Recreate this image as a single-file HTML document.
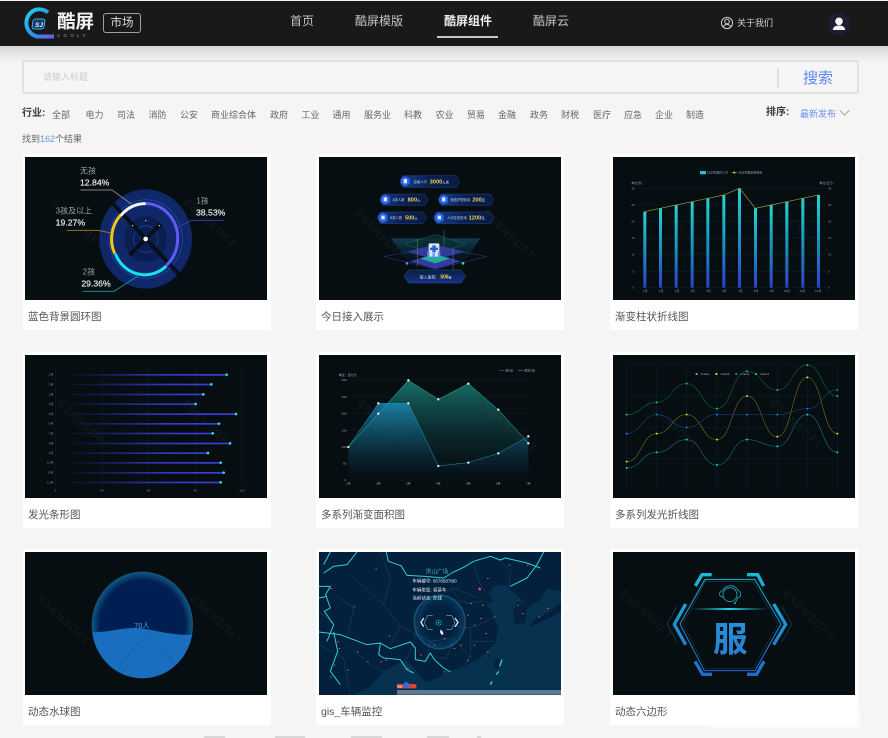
<!DOCTYPE html>
<html lang="zh"><head><meta charset="utf-8"><title>酷屏市场</title>
<style>
*{box-sizing:border-box;margin:0;padding:0}
html,body{width:888px;height:738px;overflow:hidden;background:#f5f5f5}
body{position:relative;font-family:"Liberation Sans","Noto Sans CJK SC",sans-serif;color:#555}
.a{position:absolute;white-space:nowrap}
.hd{left:0;top:1px;width:888px;height:45px;background:#191919}
.sh{left:0;top:46px;width:888px;height:16px;background:linear-gradient(#d6d6d6,#f5f5f5)}
.nav{top:13px;font-size:12px;line-height:16px;color:#c4c4c4}
.sb{left:22px;top:60px;width:837px;height:34px;border:2px solid #e2e2e2;border-radius:2px;background:#f6f6f6}
.f{top:108px;font-size:9px;line-height:14px;color:#666}
.card{position:absolute;width:248px;height:176px;background:#fff}
.card svg{position:absolute;left:2.300px;top:3.300px;width:242px;height:143px;display:block;background:#060e11;filter:blur(.35px)}
.c2 svg{left:3px}
.c3 svg{left:3.300px}
.card p{position:absolute;left:5px;top:155.500px;font-size:10.500px;line-height:14px;color:#555;white-space:nowrap}
.wm{font:bold 33px "Liberation Sans",sans-serif;letter-spacing:3px;fill:#fff;opacity:.035}
.tx{font-family:"Liberation Sans","Noto Sans CJK SC",sans-serif}
</style></head><body>
<div class="a hd"></div><div class="a sh"></div>
<svg class="a" style="left:20px;top:6px" width="38" height="36" viewBox="0 0 38 36">
<defs><linearGradient id="lg" x1="0" y1="0" x2="1" y2="1"><stop offset="0" stop-color="#1fd0e8"/><stop offset=".6" stop-color="#2f8ff0"/><stop offset="1" stop-color="#6a5cf0"/></linearGradient></defs>
<path d="M28 6.500A14 14 0 0 0 15 4 14 14 0 0 0 17 30.500H34" fill="none" stroke="url(#lg)" stroke-width="4"/>
<rect x="13" y="13" width="12" height="10" rx="2.500" transform="skewX(-8) translate(2 0)" fill="#173a66" stroke="#2fb4e8"/>
<text x="15" y="21" font-size="6.500" font-weight="bold" font-style="italic" fill="#d8f2ff" class="tx">SJ</text></svg>
<div class="a tx" style="left:57px;top:10px;font-size:18.500px;line-height:24px;font-weight:bold;color:#f2f2f2">酷屏</div>
<div class="a" style="left:57px;top:33px;font-size:4.500px;line-height:6px;letter-spacing:3.300px;color:#9a9a9a">COOLY</div>
<div class="a" style="left:103px;top:13px;width:38px;height:20px;border:1px solid #a0a0a0;border-radius:3px;font-size:11.500px;line-height:18px;text-align:center;color:#ddd">市场</div>
<div class="a nav" style="left:290px">首页</div>
<div class="a nav" style="left:355px">酷屏模版</div>
<div class="a nav" style="left:444px;font-weight:bold;color:#f0f0f0">酷屏组件</div>
<div class="a nav" style="left:533px">酷屏云</div>
<div class="a" style="left:437px;top:36px;width:61px;height:1.500px;background:#c8c8c8"></div>
<svg class="a" style="left:720px;top:16px" width="14" height="14" viewBox="0 0 14 14" fill="none" stroke="#cfcfcf"><circle cx="7" cy="7" r="5.600"/><circle cx="7" cy="5.500" r="2.300"/><path d="M3.200 11C4 9 5.500 8.500 7 8.500S10 9 10.800 11"/></svg>
<div class="a" style="left:737px;top:17px;font-size:9px;line-height:13px;color:#d0d0d0">关于我们</div>
<svg class="a" style="left:828px;top:13px" width="22" height="22" viewBox="0 0 22 22"><circle cx="11" cy="11" r="11" fill="#1f1d33"/><circle cx="11" cy="8.300" r="3.800" fill="#f4f4f4"/><path d="M4.800 17C5 13.500 8 12.500 11 12.500S17 13.500 17.200 17Z" fill="#f4f4f4"/></svg>

<div class="a sb"></div>
<div class="a" style="left:43px;top:70px;font-size:9px;line-height:14px;color:#c9c9c9">请输入标题</div>
<div class="a" style="left:777px;top:68px;width:1.500px;height:20px;background:#e2e2e2"></div>
<div class="a" style="left:803px;top:68px;font-size:15px;line-height:21px;color:#5c86f3">搜索</div>

<div class="a f" style="left:22px;top:107px;font-size:10px;font-weight:bold;color:#3c3c3c">行业:</div>
<div class="a f" style="left:52px">全部</div><div class="a f" style="left:85.500px">电力</div><div class="a f" style="left:117px">司法</div><div class="a f" style="left:148.500px">消防</div><div class="a f" style="left:180px">公安</div><div class="a f" style="left:211px">商业综合体</div><div class="a f" style="left:270px">政府</div><div class="a f" style="left:301.500px">工业</div><div class="a f" style="left:332.500px">通用</div><div class="a f" style="left:364px">服务业</div><div class="a f" style="left:404px">科教</div><div class="a f" style="left:435.500px">农业</div><div class="a f" style="left:467px">贸易</div><div class="a f" style="left:498px">金融</div><div class="a f" style="left:530px">政务</div><div class="a f" style="left:561px">财税</div><div class="a f" style="left:593px">医疗</div><div class="a f" style="left:624px">应急</div><div class="a f" style="left:655px">企业</div><div class="a f" style="left:686px">制造</div>
<div class="a f" style="left:766px;top:106px;font-size:10px;font-weight:bold;color:#3c3c3c">排序:</div>
<div class="a f" style="left:800px;top:107px;color:#6a8ff5">最新发布</div>
<svg class="a" style="left:839px;top:109px" width="11" height="8" viewBox="0 0 11 8"><path d="M.800 1.500 5.500 6 10.200 1.500" fill="none" stroke="#a8a8a8"/></svg>
<div class="a f" style="left:22px;top:132px;color:#666">找到<span style="color:#6a8ff5">162</span>个结果</div>

<!-- 1 -->
<div class="card" style="left:23px;top:154px"><svg viewBox="16 22 726 429">
<text class="wm" transform="translate(95 165) rotate(43)">ESENSOFT</text><text class="wm" transform="translate(490 160) rotate(43)">ESENSOFT</text>
<g transform="translate(378 268) scale(1 1.070)">
<circle r="139" fill="#10286a"/>
<circle r="110" fill="none" stroke="#2756d0" stroke-width="1.500"/>
<circle r="92" fill="#10286a"/><circle r="64" fill="#0b1e52"/>
<circle r="37" fill="none" stroke="#2a4fb0" stroke-width="1.500"/>
</g>
<path d="M278 160 478 374M424 222 330 316" stroke="#060e11" stroke-width="12" fill="none" opacity=".92"/>
<path d="M378 162A96 103 0 0 1 474 268 96 103 0 0 1 440 347" fill="none" stroke="#5f5cf2" stroke-width="9"/>
<path d="M440 349A96 103 0 0 1 287 312" fill="none" stroke="#17e2f0" stroke-width="9"/>
<path d="M285 312A96 103 0 0 1 303 196" fill="none" stroke="#f5c518" stroke-width="9"/>
<path d="M303 198A96 103 0 0 1 378 162" fill="none" stroke="#f4f4f4" stroke-width="9"/>
<circle cx="378" cy="268" r="7" fill="#fff"/><circle cx="339" cy="228" r="2" fill="#ddd"/><circle cx="378" cy="213" r="2" fill="#ddd"/><circle cx="419" cy="228" r="2" fill="#ddd"/>
<path d="M182 121H277L335 163" fill="none" stroke="#aaa" stroke-width="2"/>
<path d="M141 242H235L274 250" fill="none" stroke="#8a7420" stroke-width="3"/>
<path d="M612 212H515L476 232" fill="none" stroke="#3a37a0" stroke-width="3"/>
<path d="M189 425H283L360 376" fill="none" stroke="#108a90" stroke-width="3"/>
<g class="tx" font-size="24" fill="#9aa0a4"><text x="181" y="72">无孩</text><text x="108" y="192">3孩及以上</text><text x="530" y="162">1孩</text><text x="189" y="375">2孩</text></g>
<g class="tx" font-size="26" fill="#e6e6e6" stroke="#e6e6e6" stroke-width=".6"><text x="181" y="107">12.84%</text><text x="108" y="227">19.27%</text><text x="529" y="197">38.53%</text><text x="185" y="410">29.36%</text></g>
</svg><p>蓝色背景圆环图</p></div>

<!-- 2 -->
<div class="card c2" style="left:316px;top:154px"><svg viewBox="16 22 726 429">
<defs><linearGradient id="pl" x1="0" x2="1" y1="0" y2="0"><stop offset="0" stop-color="#153f98"/><stop offset=".5" stop-color="#0b1f50"/><stop offset="1" stop-color="#0a1a42"/></linearGradient>
<linearGradient id="bm" x1="0" x2="0" y1="0" y2="1"><stop offset="0" stop-color="#082040"/><stop offset="1" stop-color="#1a2f88"/></linearGradient>
<linearGradient id="cone" x1="0" x2="0" y1="0" y2="1"><stop offset="0" stop-color="#14506a" stop-opacity=".75"/><stop offset="1" stop-color="#0a2040" stop-opacity=".15"/></linearGradient></defs>
<text class="wm" transform="translate(120 195) rotate(43)">ESENSOFT</text><text class="wm" transform="translate(505 195) rotate(43)">ESENSOFT</text>
<g fill="url(#pl)" stroke="#26437f" stroke-width="1.500">
<path d="M268 78H428L438 95 428 113H268L258 95Z"/>
<path d="M208 133H334L344 150 334 167H208L198 150Z"/><path d="M383 133H530L540 150 530 167H383L373 150Z"/>
<path d="M201 187H328L338 204 328 222H201L191 204Z"/><path d="M369 187H530L540 204 530 222H369L359 204Z"/>
</g>
<g fill="#2a66ea"><path d="M275 80 288 87V103L275 111 262 103V87Z"/><path d="M215 135 228 142V158L215 165 202 158V142Z"/><path d="M390 135 403 142V158L390 165 377 158V142Z"/><path d="M208 189 221 196V212L208 220 195 212V196Z"/><path d="M377 189 390 196V212L377 220 364 212V196Z"/></g>
<g fill="#dfe8ff"><rect x="270" y="88" width="10" height="13"/><rect x="210" y="143" width="10" height="12"/><rect x="385" y="143" width="10" height="12"/><rect x="203" y="198" width="10" height="11"/><rect x="372" y="198" width="10" height="11"/></g>
<g class="tx" font-size="10" fill="#b8c6e0"><text x="300" y="100">高级人次</text><text x="236" y="154">A类人数</text><text x="410" y="154">家庭护理费用</text><text x="229" y="208">B类人数</text><text x="400" y="208">人均住院费用</text></g>
<g class="tx" font-size="17" font-weight="bold" fill="#e8d850"><text x="348" y="101">3000<tspan font-size="10" fill="#b8c6e0">人次</tspan></text><text x="282" y="156">800<tspan font-size="10" fill="#b8c6e0">人</tspan></text><text x="476" y="156">200<tspan font-size="10" fill="#b8c6e0">元</tspan></text><text x="274" y="210">500<tspan font-size="10" fill="#b8c6e0">人</tspan></text><text x="465" y="210">1200<tspan font-size="10" fill="#b8c6e0">元</tspan></text></g>
<path d="M232 266H500L450 340H285Z" fill="url(#cone)"/>
<path d="M365 254 455 284 365 314 275 284Z" fill="#0a2b33" stroke="#137a5f" stroke-width="1.500" opacity=".8"/>
<path d="M365 285 455 306 365 330 278 306Z" fill="#3740a8" opacity=".85"/>
<path d="M365 290 520 321 365 358 210 321Z" fill="none" stroke="#2b3f90" stroke-width="1.500"/>
<path d="M365 312 443 335 365 358 288 335Z" fill="#3339a4"/>
<path d="M365 313 408 327 365 341 320 327Z" fill="#1eb08e"/>
<rect x="345" y="281" width="32" height="40" rx="3" fill="#dce8fa"/><path d="M356 287H366V294H373V301H366V308H356V301H349V294H356Z" fill="#2b62c4"/>
<path d="M340 305h8v22h-8zM356 310h8v18h-8zM372 305h8v22h-8z" fill="#5c8cef" opacity=".8"/>
<path d="M311 268V350M391 242V290M418 295V360" stroke="#75806a" stroke-width="1.500"/>
<circle cx="448" cy="341" r="4" fill="#2ae0a0"/><circle cx="280" cy="341" r="4" fill="#6a88f0"/>
<path d="M285 361H442L456 380 442 400H285L271 380Z" fill="url(#bm)" stroke="#2c4f9c" stroke-width="1.500"/>
<text class="tx" x="318" y="387" font-size="12" fill="#d6dff0">接入医院</text><text class="tx" x="380" y="387" font-size="15" font-weight="bold" fill="#e8d850">506<tspan font-size="9" fill="#b8c6e0">家</tspan></text>
</svg><p>今日接入展示</p></div>

<!-- 3 -->
<div class="card c3" style="left:610px;top:154px"><svg viewBox="16 22 726 429">
<defs><linearGradient id="bar" x1="0" x2="0" y1="0" y2="1"><stop offset="0" stop-color="#24d6cc"/><stop offset=".5" stop-color="#1a93c0"/><stop offset="1" stop-color="#2a3ed2"/></linearGradient></defs>
<text class="wm" transform="translate(150 185) rotate(43)" style="opacity:.025">ESENSOFT</text><text class="wm" transform="translate(505 185) rotate(43)" style="opacity:.025">ESENSOFT</text>
<g stroke="#111f33" stroke-width="1.500"><path d="M90 116H655M90 166H655M90 215H655M90 265H655M90 315H655M90 365H655M90 414H655"/></g>
<g fill="url(#bar)"><rect x="107" y="186" width="9" height="228"/><rect x="154" y="176" width="9" height="238"/><rect x="201" y="166" width="9" height="248"/><rect x="249" y="156" width="9" height="258"/><rect x="296" y="146" width="9" height="268"/><rect x="344" y="136" width="9" height="278"/><rect x="391" y="116" width="9" height="298"/><rect x="439" y="176" width="9" height="238"/><rect x="486" y="166" width="9" height="248"/><rect x="533" y="156" width="9" height="258"/><rect x="581" y="146" width="9" height="268"/><rect x="628" y="136" width="9" height="278"/></g>
<path d="M111 186 158 176 206 166 253 156 301 146 348 136 396 116 443 176 490 166 538 156 585 146 632 136" fill="none" stroke="#a8904a" stroke-width="2"/>
<rect x="277" y="64" width="18" height="10" fill="#20c0d8"/><path d="M372 69H388" stroke="#a8904a" stroke-width="2"/><circle cx="380" cy="69" r="3" fill="#ecd040"/>
<g class="tx" font-size="9" fill="#8d98a2"><text x="298" y="72">日出色面积人次</text><text x="392" y="72">日出色面积碳排目</text><text x="71" y="103">单位(家)</text><text x="635" y="103">单位(百元)</text>
<text x="71" y="119">30</text><text x="71" y="169">25</text><text x="71" y="218">20</text><text x="71" y="268">15</text><text x="71" y="318">10</text><text x="75" y="368">5</text><text x="75" y="417">0</text>
<text x="661" y="119">30</text><text x="661" y="169">25</text><text x="661" y="218">20</text><text x="661" y="268">15</text><text x="661" y="318">10</text><text x="661" y="368">5</text><text x="661" y="417">0</text>
<text x="106" y="427">1月</text><text x="153" y="427">2月</text><text x="201" y="427">3月</text><text x="248" y="427">4月</text><text x="296" y="427">5月</text><text x="343" y="427">6月</text><text x="391" y="427">7月</text><text x="438" y="427">8月</text><text x="485" y="427">9月</text><text x="528" y="427">10月</text><text x="575" y="427">11月</text><text x="622" y="427">12月</text></g>
</svg><p>渐变柱状折线图</p></div>

<!-- 4 -->
<div class="card" style="left:23px;top:352px"><svg viewBox="16 22 726 429">
<defs><linearGradient id="hb" gradientUnits="userSpaceOnUse" x1="125" x2="560" y1="0" y2="0"><stop offset="0" stop-color="#2a2ea8" stop-opacity="0"/><stop offset=".7" stop-color="#3337c0"/><stop offset="1" stop-color="#3a3ed8"/></linearGradient></defs>
<text class="wm" transform="translate(112 170) rotate(43)">ESENSOFT</text><text class="wm" transform="translate(485 170) rotate(43)">ESENSOFT</text>
<path d="M107 60V420M247 60V420M387 60V420M527 60V420M667 60V420" stroke="#0f1c33" stroke-width="1.500"/>
<g fill="url(#hb)"><rect x="125" y="79" width="496" height="5"/><rect x="125" y="108" width="450" height="5"/><rect x="125" y="138" width="426" height="5"/><rect x="125" y="167" width="403" height="5"/><rect x="125" y="197" width="524" height="5"/><rect x="125" y="226" width="473" height="5"/><rect x="125" y="255" width="454" height="5"/><rect x="125" y="285" width="506" height="5"/><rect x="125" y="314" width="440" height="5"/><rect x="125" y="343" width="478" height="5"/><rect x="125" y="373" width="487" height="5"/><rect x="125" y="402" width="478" height="5"/></g>
<g fill="#2ce0c8"><circle cx="621" cy="81" r="4"/><circle cx="575" cy="110" r="4"/><circle cx="551" cy="140" r="4"/><circle cx="528" cy="169" r="4"/><circle cx="649" cy="199" r="4"/><circle cx="598" cy="228" r="4"/><circle cx="579" cy="257" r="4"/><circle cx="631" cy="287" r="4"/><circle cx="565" cy="316" r="4"/><circle cx="603" cy="345" r="4"/><circle cx="612" cy="375" r="4"/><circle cx="603" cy="404" r="4"/></g>
<g class="tx" font-size="9" fill="#7d8890" text-anchor="end"><text x="101" y="84">1月</text><text x="101" y="113">2月</text><text x="101" y="143">3月</text><text x="101" y="172">4月</text><text x="101" y="202">5月</text><text x="101" y="231">6月</text><text x="101" y="260">7月</text><text x="101" y="290">8月</text><text x="101" y="319">9月</text><text x="101" y="348">10月</text><text x="101" y="378">11月</text><text x="101" y="407">12月</text></g>
<g class="tx" font-size="9" fill="#7d8890" text-anchor="middle"><text x="107" y="431">0</text><text x="247" y="431">50</text><text x="387" y="431">60</text><text x="527" y="431">90</text><text x="667" y="431">120</text></g>
</svg><p>发光条形图</p></div>

<!-- 5 -->
<div class="card c2" style="left:316px;top:352px"><svg viewBox="16 22 726 429">
<defs><linearGradient id="g5a" gradientUnits="userSpaceOnUse" x1="0" x2="0" y1="98" y2="397"><stop offset="0" stop-color="#1f9a8c" stop-opacity=".7"/><stop offset="1" stop-color="#0a3040" stop-opacity="0"/></linearGradient>
<linearGradient id="g5b" gradientUnits="userSpaceOnUse" x1="0" x2="0" y1="167" y2="397"><stop offset="0" stop-color="#1b8fc0" stop-opacity=".75"/><stop offset="1" stop-color="#0a3050" stop-opacity="0"/></linearGradient></defs>
<text class="wm" transform="translate(130 170) rotate(43)">ESENSOFT</text><text class="wm" transform="translate(510 180) rotate(43)">ESENSOFT</text>
<path d="M104 298 194 198 284 98 374 155 464 108 554 186 644 287V397H104Z" fill="url(#g5a)"/>
<path d="M104 298 194 167H284L374 355 464 345 554 317 644 266V397H104Z" fill="url(#g5b)"/>
<path d="M104 97H644M104 148H644M104 198H644M104 248H644M104 298H644M104 347H644M104 397H644" stroke="#2a3a40" stroke-width="1.200" stroke-dasharray="3 3"/>
<path d="M104 298 194 198 284 98 374 155 464 108 554 186 644 287" fill="none" stroke="#29bfae" stroke-width="1.500"/>
<path d="M104 298 194 167H284L374 355 464 345 554 317 644 266" fill="none" stroke="#2394c4" stroke-width="1.500"/>
<g fill="#e6f2f2"><circle cx="104" cy="298" r="3.500"/><circle cx="194" cy="198" r="3.500"/><circle cx="284" cy="98" r="3.500"/><circle cx="374" cy="155" r="3.500"/><circle cx="464" cy="108" r="3.500"/><circle cx="554" cy="186" r="3.500"/><circle cx="644" cy="287" r="3.500"/><circle cx="194" cy="167" r="3.500"/><circle cx="284" cy="167" r="3.500"/><circle cx="374" cy="355" r="3.500"/><circle cx="464" cy="345" r="3.500"/><circle cx="554" cy="317" r="3.500"/><circle cx="644" cy="266" r="3.500"/></g>
<g class="tx" font-size="9" fill="#9aa6aa"><text x="75" y="85">单位：百分比</text><text x="84" y="100">300</text><text x="84" y="151">250</text><text x="84" y="201">200</text><text x="84" y="251">150</text><text x="84" y="301">100</text><text x="88" y="350">50</text><text x="92" y="400">0</text>
<text x="97" y="411">1月</text><text x="187" y="411">2月</text><text x="277" y="411">3月</text><text x="367" y="411">4月</text><text x="457" y="411">5月</text><text x="547" y="411">6月</text><text x="637" y="411">7月</text><text x="575" y="72">西2站</text><text x="632" y="72">顺科2站</text></g>
<path d="M556 69H572" stroke="#2394c4" stroke-width="1.500"/><path d="M613 69H629" stroke="#29bfae" stroke-width="1.500"/>
</svg><p>多系列渐变面积图</p></div>

<!-- 6 -->
<div class="card c3" style="left:610px;top:352px"><svg viewBox="16 22 726 429">
<text class="wm" transform="translate(112 170) rotate(43)">ESENSOFT</text><text class="wm" transform="translate(485 170) rotate(43)">ESENSOFT</text>
<path d="M57 52V425M147 52V425M237 52V425M328 52V425M418 52V425M509 52V425M599 52V425M689 52V425M57 52H689M57 145H689M57 239H689M57 332H689" stroke="#0e2038" stroke-width="1.500" fill="none"/>
<g fill="none" stroke-width="1.600">
<path stroke="#0f6a4c" d="M57 201C102 201 102 164 147 164C192 164 192 108 237 108C282 108 282 183 328 183C373 183 373 71 418 71C463 71 463 127 509 127C554 127 554 52 599 52C644 52 644 145 689 145"/>
<path stroke="#7c7a22" d="M57 342C102 342 102 258 147 258C192 258 192 201 237 201C282 201 282 276 328 276C373 276 373 145 418 145C463 145 463 267 509 267C554 267 554 89 599 89C644 89 644 258 689 258"/>
<path stroke="#124a88" d="M57 258C102 258 102 201 147 201C192 201 192 239 237 239C282 239 282 201 328 201C373 201 373 201 418 201C463 201 463 201 509 201C554 201 554 183 599 183C644 183 644 127 689 127"/>
<path stroke="#0f7d8c" d="M57 361C102 361 102 314 147 314C192 314 192 276 237 276C282 276 282 352 328 352C373 352 373 276 418 276C463 276 463 296 509 296C554 296 554 201 599 201C644 201 644 314 689 314"/>
</g>
<g fill="#18c86c"><circle cx="57" cy="201" r="3"/><circle cx="147" cy="164" r="3"/><circle cx="237" cy="108" r="3"/><circle cx="328" cy="183" r="3"/><circle cx="418" cy="71" r="3"/><circle cx="509" cy="127" r="3"/><circle cx="599" cy="52" r="3"/><circle cx="689" cy="145" r="3"/><circle cx="445" cy="79" r="3.500"/></g>
<g fill="#dcd030"><circle cx="57" cy="342" r="3"/><circle cx="147" cy="258" r="3"/><circle cx="237" cy="201" r="3"/><circle cx="328" cy="276" r="3"/><circle cx="418" cy="145" r="3"/><circle cx="509" cy="267" r="3"/><circle cx="599" cy="89" r="3"/><circle cx="689" cy="258" r="3"/><circle cx="326" cy="79" r="3.500"/></g>
<g fill="#1878e0"><circle cx="57" cy="258" r="3"/><circle cx="147" cy="201" r="3"/><circle cx="237" cy="239" r="3"/><circle cx="328" cy="201" r="3"/><circle cx="418" cy="201" r="3"/><circle cx="509" cy="201" r="3"/><circle cx="599" cy="183" r="3"/><circle cx="689" cy="127" r="3"/><circle cx="386" cy="79" r="3.500"/></g>
<g fill="#18c8e0"><circle cx="57" cy="361" r="3"/><circle cx="147" cy="314" r="3"/><circle cx="237" cy="276" r="3"/><circle cx="328" cy="352" r="3"/><circle cx="418" cy="276" r="3"/><circle cx="509" cy="296" r="3"/><circle cx="599" cy="201" r="3"/><circle cx="689" cy="314" r="3"/><circle cx="267" cy="79" r="3.500"/></g>
<g class="tx" font-size="9" fill="#a8b0c0"><text x="279" y="82">Index1</text><text x="339" y="82">Index2</text><text x="398" y="82">Index3</text><text x="457" y="82">Index4</text></g>
</svg><p>多系列发光折线图</p></div>

<!-- 7 -->
<div class="card" style="left:23px;top:549px"><svg viewBox="16 22 726 429">
<defs><radialGradient id="ball" cx=".5" cy=".5" r=".5"><stop offset="0" stop-color="#001c50"/><stop offset=".84" stop-color="#011f52"/><stop offset="1" stop-color="#115a84"/></radialGradient>
<clipPath id="bc"><ellipse cx="368" cy="241" rx="152" ry="160"/></clipPath></defs>
<text class="wm" transform="translate(52 165) rotate(43)">ESENSOFT</text><text class="wm" transform="translate(510 165) rotate(43)">ESENSOFT</text>
<ellipse cx="368" cy="241" rx="152" ry="160" fill="url(#ball)"/>
<g clip-path="url(#bc)"><path d="M210 263C260 265 300 250 345 250 395 250 440 274 525 270V410H210Z" fill="#1a6ec0"/><path d="M280 400C320 340 340 300 390 270M440 320 470 370M330 350 300 390" fill="none" stroke="#155aa4" stroke-width="5" opacity=".35"/></g>
<text x="367" y="250" text-anchor="middle" font-size="22" class="tx" fill="#2fb6d8">70人</text>
</svg><p>动态水球图</p></div>

<!-- 8 -->
<div class="card c2" style="left:316px;top:549px"><svg viewBox="16 22 726 429">
<defs><radialGradient id="halo" cx=".5" cy=".5" r=".5"><stop offset=".55" stop-color="#0a4d80" stop-opacity="0"/><stop offset=".93" stop-color="#0f6a9c" stop-opacity=".3"/><stop offset="1" stop-color="#3aa8d0" stop-opacity=".55"/></radialGradient></defs>
<rect x="16" y="22" width="726" height="429" fill="#03203d"/>
<path d="M742 140 700 130 680 165 640 190 625 165 585 130 570 120 540 125 525 150 540 170 520 180 535 205 555 250 545 295 500 340 440 372 400 378 375 400 335 412 305 375 275 345 210 380 170 425 120 451H742Z" fill="#06324f"/>
<path d="M742 22H690L680 60 640 105 585 130 625 165 640 190 680 165 700 130 742 90Z" fill="#03203d"/>
<path d="M610 170 640 180 635 235 605 240 598 205Z" fill="#03203d"/><path d="M742 175 700 205 660 225 650 245 700 225 742 200Z" fill="#03203d"/>
<path d="M548 340 562 345 550 375 540 365Z" fill="#03203d"/>
<g fill="none" stroke="#1b4f66" stroke-width="1.400"><path d="M200 22 230 100 210 180 260 245 350 290 420 280 470 340M120 100 210 180M490 160 420 130 330 180 300 290M470 250 380 240M100 300 170 360 210 380M16 300 90 340 110 451M540 220 470 250 470 340M300 290 280 345M410 130 440 170 470 175 510 170M480 60 500 120 525 150M560 50 590 80 585 130M60 150 120 190 100 280M16 200 60 240M260 245 230 300M350 290 335 350M420 280 400 340M470 340 440 372M400 340 360 340M540 290 470 290"/></g>
<g fill="none" stroke="#2fd0d8" stroke-width="3" stroke-linejoin="round"><path d="M218 22 224 50 262 63 280 92 335 95 390 100 420 82 450 68 480 50 530 35 560 46 575 40 640 55 680 70"/><path d="M690 22 670 60 640 100 590 125"/><path d="M16 125 50 125 36 150 50 190 32 200 60 240 40 290"/><path d="M16 262 80 270 120 285 160 300 200 295 230 312 290 292 305 310 305 345 335 350 350 325 362 345 390 370 410 382"/><path d="M200 295 195 330 210 340 260 345 280 375 300 385M60 262 72 320 50 380 80 420"/><path d="M130 22 100 60 60 65 30 85M50 22 30 60M16 160 40 155"/><path d="M565 345 558 365M555 380 548 390M535 410 530 420" stroke-width="4"/></g>
<ellipse cx="378" cy="232" rx="78" ry="82" fill="url(#halo)"/>
<g fill="none" stroke="#b8c8d8" stroke-width="1.500"><path d="M357 212H342L332 234 342 254H357M398 212H414L424 234 414 254H398"/></g>
<g fill="none" stroke="#d8f0ff" stroke-width="4"><path d="M330 220 322 233 330 246M424 220 433 233 424 246"/></g>
<circle cx="375" cy="234" r="8" fill="none" stroke="#25a8c8" stroke-width="2"/><circle cx="375" cy="234" r="2.500" fill="#46d8ea"/>
<path d="M381 254 388 262 389 270H383L379 262Z" fill="#f0f0f0"/>
<g fill="#d2584a"><circle cx="498" cy="133" r="4"/><rect x="585" y="60" width="5" height="3"/><rect x="520" y="100" width="5" height="3"/><rect x="470" y="175" width="5" height="3"/><rect x="505" y="180" width="5" height="3"/><rect x="540" y="215" width="5" height="3"/><rect x="480" y="240" width="5" height="3"/><rect x="420" y="310" width="5" height="3"/><rect x="390" y="280" width="5" height="3"/><rect x="70" y="290" width="5" height="3"/><rect x="130" y="320" width="5" height="3"/><rect x="60" y="360" width="5" height="3"/><rect x="200" y="350" width="5" height="3"/><rect x="160" y="350" width="5" height="3"/><rect x="280" y="370" width="5" height="3"/><rect x="215" y="345" width="5" height="3"/><rect x="610" y="180" width="5" height="3"/><rect x="675" y="215" width="5" height="3"/><rect x="185" y="72" width="5" height="3"/><rect x="120" y="185" width="5" height="3"/><rect x="50" y="130" width="5" height="3"/><rect x="640" y="60" width="5" height="3"/><rect x="520" y="320" width="5" height="3"/><rect x="460" y="345" width="5" height="3"/><rect x="390" y="380" width="5" height="3"/><rect x="225" y="272" width="5" height="3"/><rect x="75" y="310" width="5" height="3"/><rect x="100" y="375" width="5" height="3"/><rect x="50" y="395" width="5" height="3"/><rect x="150" y="295" width="5" height="3"/><rect x="440" y="300" width="5" height="3"/><rect x="480" y="300" width="5" height="3"/><rect x="460" y="210" width="5" height="3"/><rect x="500" y="220" width="5" height="3"/><rect x="515" y="265" width="5" height="3"/><rect x="625" y="205" width="5" height="3"/><rect x="700" y="190" width="5" height="3"/><rect x="320" y="330" width="5" height="3"/><rect x="360" y="300" width="5" height="3"/></g>
<g class="tx" fill="#e8eef2" font-size="13.500" font-family="Liberation Serif"><text x="296" y="113">车辆编号: 0576587t60</text><text x="296" y="141">车辆类型: 叔基车</text><text x="296" y="165">当前状态: 在线</text></g>
<text class="tx" x="336" y="87" font-size="17" fill="#41b6cc">洪山广场</text>
<rect x="250" y="418" width="58" height="13" fill="#d8453c"/><circle cx="278" cy="421" r="9" fill="#2a6cd8"/><text class="tx" x="251" y="429" font-size="9" font-weight="bold" fill="#fff">Bai</text>
<rect x="250" y="436" width="492" height="14" fill="#5f7a92"/>
</svg><p>gis_车辆监控</p></div>

<!-- 9 -->
<div class="card c3" style="left:610px;top:549px"><svg viewBox="16 22 726 429">
<defs><linearGradient id="hx" gradientUnits="userSpaceOnUse" x1="0" x2="0" y1="85" y2="395"><stop offset="0" stop-color="#16bcd8"/><stop offset="1" stop-color="#2468cc"/></linearGradient>
<linearGradient id="gl" x1="0" x2="1" y1="0" y2="0"><stop offset="0" stop-color="#14c8d8" stop-opacity="0"/><stop offset=".5" stop-color="#20d8e8"/><stop offset="1" stop-color="#14c8d8" stop-opacity="0"/></linearGradient>
<linearGradient id="fu" x1="0" x2="0" y1="0" y2="1"><stop offset="0" stop-color="#2492d8"/><stop offset="1" stop-color="#2a7ed0"/></linearGradient></defs>
<text class="wm" transform="translate(36 150) rotate(43)">ESENSOFT</text><text class="wm" transform="translate(522 150) rotate(43)">ESENSOFT</text>
<path d="M292 104H441L520 238 442 378H290L217 238Z" fill="none" stroke="url(#hx)" stroke-width="3"/>
<path d="M294 110H436L511 238 436 372H294L226 238Z" fill="none" stroke="url(#hx)" stroke-width="1.500" opacity=".5"/>
<g fill="none" stroke="url(#hx)" stroke-width="10"><path d="M263 124 283 90H312"/><path d="M418 90H450L468 124"/><path d="M234 178 200 239 234 300"/><path d="M498 178 534 239 498 300"/><path d="M262 350 285 389H313"/><path d="M418 389H447L469 350"/></g>
<g fill="none" stroke="#0f6d80" stroke-width="1.500"><path d="M208 185 178 238 208 292"/><path d="M522 185 553 238 522 292"/></g>
<rect x="250" y="190" width="232" height="6" fill="url(#gl)"/>
<g fill="none" stroke="#17aebf" stroke-width="2.500"><circle cx="367" cy="150" r="21"/><path d="M347 158C333 155 330 145 347 135C355 120 380 118 390 135 402 145 403 155 390 160L382 176"/></g><circle cx="381" cy="176" r="3" fill="#17aebf"/>
<text x="368" y="320" text-anchor="middle" font-size="104" font-weight="bold" class="tx" fill="url(#fu)">服</text>
</svg><p>动态六边形</p></div>

<div class="a" style="left:711px;top:708px;width:150px;height:20px;background:#fff;opacity:.4"></div>
<div class="a" style="left:204px;top:736px;width:21px;height:2px;background:#d8d8d8"></div>
<div class="a" style="left:275px;top:736px;width:30px;height:2px;background:#d8d8d8"></div>
<div class="a" style="left:351px;top:736px;width:31px;height:2px;background:#d8d8d8"></div>
<div class="a" style="left:427px;top:736px;width:22px;height:2px;background:#d8d8d8"></div>
<div class="a" style="left:477px;top:736px;width:4px;height:2px;background:#d8d8d8"></div>
</body></html>
